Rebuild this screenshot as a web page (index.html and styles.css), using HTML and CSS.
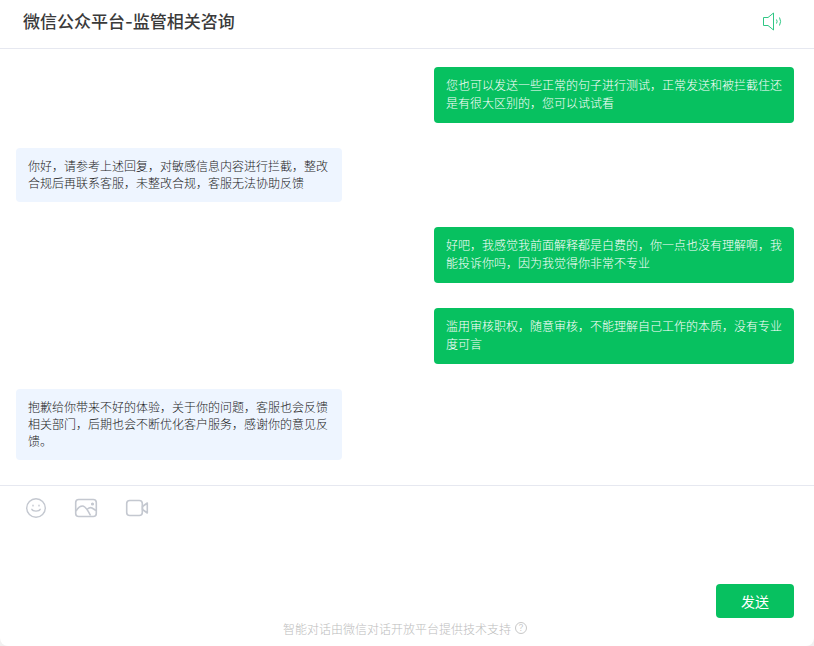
FILE: index.html
```html
<!DOCTYPE html>
<html lang="zh-CN">
<head>
<meta charset="utf-8">
<title>微信公众平台-监管相关咨询</title>
<link rel="stylesheet" href="styles.css">
</head>
<body>
<div class="window">
  <header class="header">
    <h1 class="title">微信公众平台-监管相关咨询</h1>
    <svg class="speaker" width="22" height="20" viewBox="0 0 22 20" fill="none" stroke="#2fc785" stroke-width="1">
      <path d="M1.500 5.500h4.500l5.500-4.500v17l-5.500-4.500h-4.500z"/>
      <path d="M14.500 7.500q1.200 2 0 4"/>
      <path d="M17.500 5.500q2.200 4 0 8"/>
    </svg>
  </header>
  <main class="messages">
    <div class="bubble out">您也可以发送一些正常的句子进行测试，正常发送和被拦截住还是有很大区别的，您可以试试看</div>
    <div class="bubble in">你好，请参考上述回复，对敏感信息内容进行拦截，整改合规后再联系客服，未整改合规，客服无法协助反馈</div>
    <div class="bubble out">好吧，我感觉我前面解释都是白费的，你一点也没有理解啊，我能投诉你吗，因为我觉得你非常不专业</div>
    <div class="bubble out">滥用审核职权，随意审核，不能理解自己工作的本质，没有专业度可言</div>
    <div class="bubble in">抱歉给你带来不好的体验，关于你的问题，客服也会反馈相关部门，后期也会不断优化客户服务，感谢你的意见反馈。</div>
  </main>
  <footer class="composer">
    <div class="tools">
      <svg width="22" height="22" viewBox="0 0 22 22" fill="none" stroke="#c4c8d0" stroke-width="1.400" stroke-linecap="round">
        <circle cx="11" cy="11" r="9.300"/>
        <path d="M6.800 12.300c1 2.400 7.400 2.400 8.400 0"/>
        <path d="M8 8.300v.6M14 8.300v.6"/>
      </svg>
      <svg width="24" height="20" viewBox="0 0 24 20" fill="none" stroke="#c4c8d0" stroke-width="1.600" stroke-linejoin="round">
        <rect x="1.700" y="1.500" width="20.600" height="17" rx="3"/>
        <path d="M2 13c2-3.500 4.500-5 6.500-5s5 3.500 8 9.500M13.500 11c1.500-1.300 3-1.800 4.500-1l4 2.500"/>
        <circle cx="18.500" cy="6" r="0.800"/>
      </svg>
      <svg width="24" height="18" viewBox="0 0 24 18" fill="none" stroke="#c4c8d0" stroke-width="1.600" stroke-linejoin="round">
        <rect x="1.700" y="1.500" width="15.600" height="15" rx="3"/>
        <path d="M17.500 7.500l4.800-3.500v10l-4.800-3.500z"/>
      </svg>
    </div>
    <div class="actions">
      <button class="send" type="button">发送</button>
    </div>
    <div class="credit">
      <span>智能对话由微信对话开放平台提供技术支持</span>
      <span class="help">?</span>
    </div>
  </footer>
</div>
</body>
</html>
```
FILE: styles.css
```css
* { box-sizing: border-box; }
html, body { margin: 0; height: 100%; background: #f1f1f1; }
body { font-family: "Inter", "Noto Sans CJK SC", sans-serif; overflow: hidden; }
.window {
  width: 814px;
  height: 646px;
  display: flex;
  flex-direction: column;
  background: #fff;
  border-radius: 0 0 8px 8px;
}
.header {
  height: 49px;
  flex: none;
  display: flex;
  align-items: center;
  justify-content: space-between;
  padding: 0 30px 4px 23px;
  border-bottom: 1px solid #e6e8f0;
}
.title { margin: 0; font-size: 17px; line-height: 24px; font-weight: 500; color: #3a3a3a; }
.messages {
  height: 437px;
  flex: none;
  padding: 18px 20px 0 16px;
  display: flex;
  flex-direction: column;
  gap: 25px;
  border-bottom: 1px solid #e6e8f0;
}
.bubble {
  width: 326px;
  padding: 10px 12px;
  font-size: 12px;
  font-weight: 300;
  line-height: 17px;
  border-radius: 4px;
  color: #1c1c1c;
  background: #eef5ff;
}
.bubble.out {
  width: 360px;
  align-self: flex-end;
  line-height: 18px;
  color: #fff;
  background: #07c160;
}
.composer { flex: 1; display: flex; flex-direction: column; padding: 11px 20px 0 25px; }
.tools { display: flex; align-items: center; gap: 27px; height: 22px; }
.actions { display: flex; justify-content: flex-end; margin-top: 65px; }
.send {
  width: 78px;
  height: 34px;
  border: 0;
  border-radius: 4px;
  background: #07c160;
  color: #fff;
  font: 400 14px "Inter", "Noto Sans CJK SC", sans-serif;
}
.credit {
  margin: 2px -16px 0 -25px;
  display: flex;
  justify-content: center;
  align-items: center;
  gap: 4px;
  height: 16px;
  font-size: 12px;
  font-weight: 300;
  color: #bdbdbd;
}
.help {
  width: 12px;
  height: 12px;
  border: 1px solid #c8c8c8;
  border-radius: 50%;
  font-size: 9px;
  line-height: 10px;
  text-align: center;
}
```
